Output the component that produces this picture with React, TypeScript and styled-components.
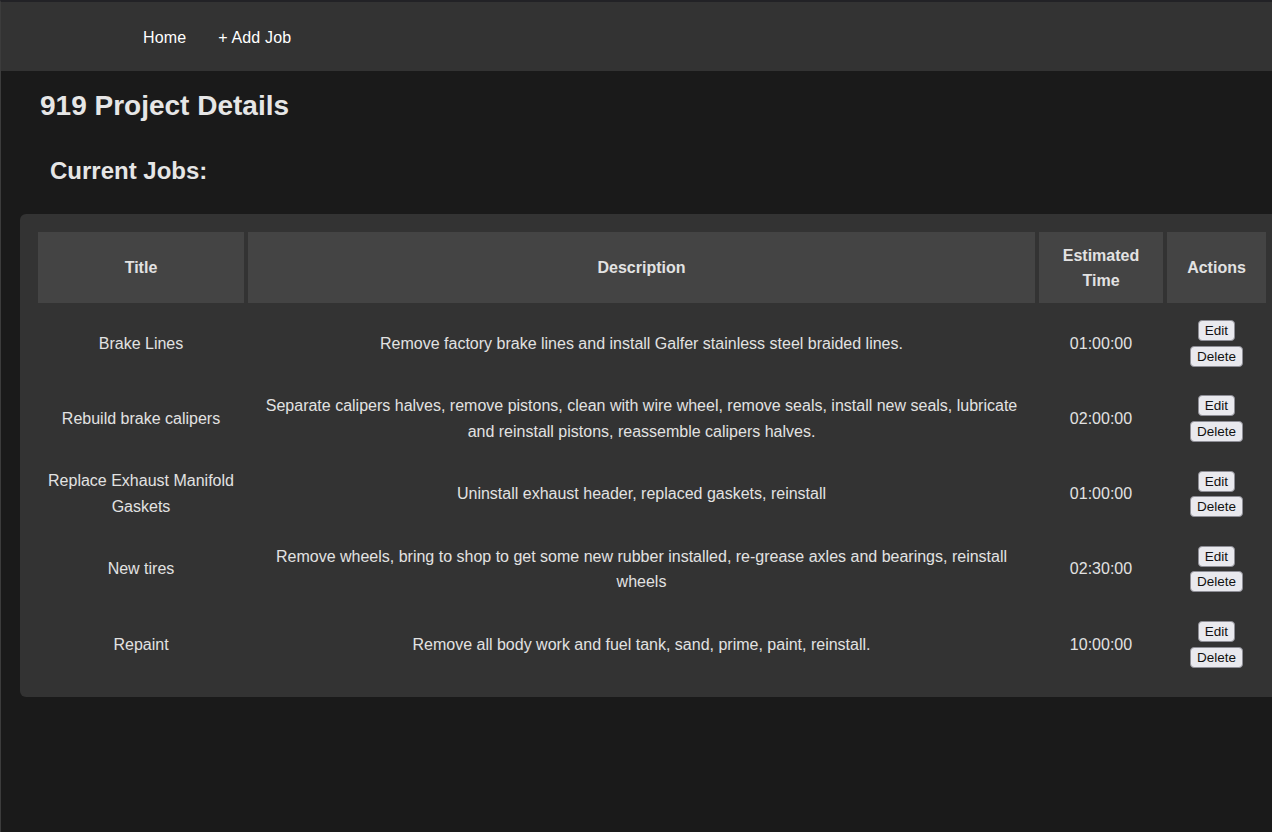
import React from "react";
import styled, { createGlobalStyle } from "styled-components";

const GlobalStyle = createGlobalStyle`
  html, body {
    margin: 0;
    padding: 0;
    background: #1a1a1a;
    overflow: hidden;
  }
  body {
    font-family: "Liberation Sans", Arial, sans-serif;
    color: #e2e2e2;
    width: 1272px;
    height: 832px;
    box-sizing: border-box;
    border-top: 2px solid #222226;
    border-left: 1px solid #3c3c3c;
  }
`;

const Nav = styled.nav`
  height: 69px;
  background: #333333;
  display: flex;
  align-items: center;
  padding-left: 142px;
  gap: 32px;
`;

const NavLink = styled.a`
  color: #ffffff;
  font-size: 16px;
  text-decoration: none;
  line-height: 20px;
  margin-top: 3px;
  letter-spacing: 0.15px;
`;

const Main = styled.main`
  padding: 0 19px;
`;

const Title = styled.h1`
  margin: 19px 0 0 20px;
  font-size: 28px;
  line-height: 32px;
  font-weight: 700;
  color: #e6e6e6;
`;

const SubTitle = styled.h2`
  margin: 35px 0 0 30px;
  font-size: 24px;
  line-height: 28px;
  font-weight: 700;
  color: #e6e6e6;
`;

const Card = styled.section`
  margin-top: 29px;
  width: 1268px;
  box-sizing: border-box;
  background: #333333;
  border-radius: 6px;
  padding: 14px;
`;

const Table = styled.table`
  border-collapse: separate;
  border-spacing: 4px;
  table-layout: fixed;
  width: 1236px;
`;

const HeadCell = styled.th<{ $w: number }>`
  width: ${(p) => p.$w}px;
  height: 71px;
  box-sizing: border-box;
  background: #444444;
  font-size: 16px;
  font-weight: 700;
  line-height: 25px;
  color: #e2e2e2;
  text-align: center;
  padding: 0 10px;
`;

const Cell = styled.td`
  font-size: 16px;
  line-height: 25.6px;
  color: #e2e2e2;
  text-align: center;
  vertical-align: middle;
  padding: 11px 10px 9px;
`;

const ButtonLine = styled.div`
  height: 25.6px;
  display: flex;
  align-items: center;
  justify-content: center;
`;

const SmallButton = styled.button`
  font-family: "Liberation Sans", Arial, sans-serif;
  font-size: 13.5px;
  line-height: 17px;
  height: 21px;
  padding: 1px 6px;
  color: #111;
  background: #e9e9ee;
  border: 1px solid #8e8e96;
  border-radius: 4px;
  box-sizing: border-box;
`;

const jobs = [
  {
    title: "Brake Lines",
    desc: "Remove factory brake lines and install Galfer stainless steel braided lines.",
    time: "01:00:00",
  },
  {
    title: "Rebuild brake calipers",
    desc: "Separate calipers halves, remove pistons, clean with wire wheel, remove seals, install new seals, lubricate and reinstall pistons, reassemble calipers halves.",
    time: "02:00:00",
  },
  {
    title: "Replace Exhaust Manifold Gaskets",
    desc: "Uninstall exhaust header, replaced gaskets, reinstall",
    time: "01:00:00",
  },
  {
    title: "New tires",
    desc: "Remove wheels, bring to shop to get some new rubber installed, re-grease axles and bearings, reinstall wheels",
    time: "02:30:00",
  },
  {
    title: "Repaint",
    desc: "Remove all body work and fuel tank, sand, prime, paint, reinstall.",
    time: "10:00:00",
  },
];

export default function App() {
  return (
    <>
      <GlobalStyle />
      <Nav>
        <NavLink href="#">Home</NavLink>
        <NavLink href="#">+ Add Job</NavLink>
      </Nav>
      <Main>
        <Title>919 Project Details</Title>
        <SubTitle>Current Jobs:</SubTitle>
        <Card>
          <Table>
            <thead>
              <tr>
                <HeadCell $w={206}>Title</HeadCell>
                <HeadCell $w={787}>Description</HeadCell>
                <HeadCell $w={124}>Estimated Time</HeadCell>
                <HeadCell $w={99}>Actions</HeadCell>
              </tr>
            </thead>
            <tbody>
              {jobs.map((j) => (
                <tr key={j.title}>
                  <Cell>{j.title}</Cell>
                  <Cell>{j.desc}</Cell>
                  <Cell>{j.time}</Cell>
                  <Cell>
                    <ButtonLine>
                      <SmallButton>Edit</SmallButton>
                    </ButtonLine>
                    <ButtonLine>
                      <SmallButton>Delete</SmallButton>
                    </ButtonLine>
                  </Cell>
                </tr>
              ))}
            </tbody>
          </Table>
        </Card>
      </Main>
    </>
  );
}
